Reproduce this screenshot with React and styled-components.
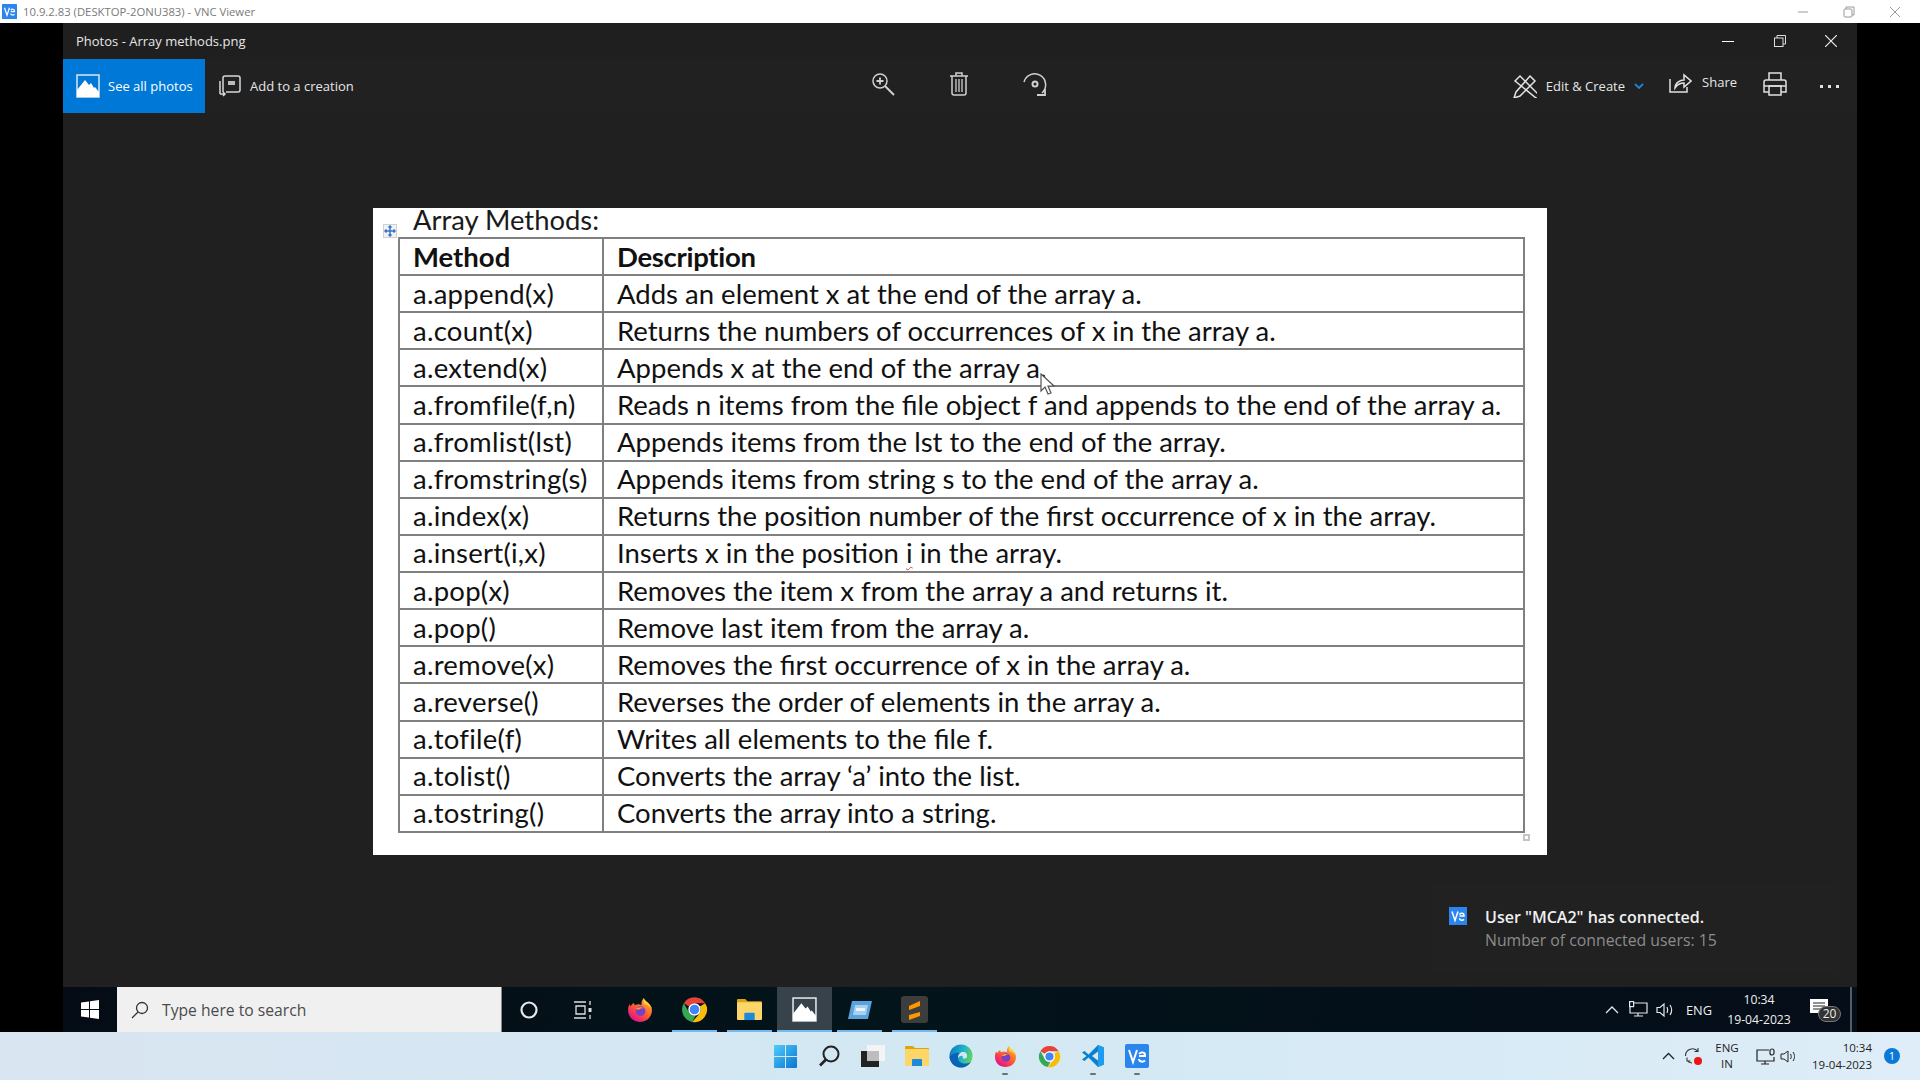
import React from 'react';
import styled, { createGlobalStyle } from 'styled-components';

const rows = [
  ['a.append(x)', 'Adds an element x at the end of the array a.'],
  ['a.count(x)', 'Returns the numbers of occurrences of x in the array a.'],
  ['a.extend(x)', 'Appends x at the end of the array a.'],
  ['a.fromfile(f,n)', 'Reads n items from the file object f and appends to the end of the array a.'],
  ['a.fromlist(lst)', 'Appends items from the lst to the end of the array.'],
  ['a.fromstring(s)', 'Appends items from string s to the end of the array a.'],
  ['a.index(x)', 'Returns the position number of the first occurrence of x in the array.'],
  ['a.insert(i,x)', <>Inserts x in the position <Squiggle>i</Squiggle> in the array.</>],
  ['a.pop(x)', 'Removes the item x from the array a and returns it.'],
  ['a.pop()', 'Remove last item from the array a.'],
  ['a.remove(x)', 'Removes the first occurrence of x in the array a.'],
  ['a.reverse()', 'Reverses the order of elements in the array a.'],
  ['a.tofile(f)', 'Writes all elements to the file f.'],
  ['a.tolist()', 'Converts the array ‘a’ into the list.'],
  ['a.tostring()', 'Converts the array into a string.'],
];

function Squiggle({ children }) {
  return <SquiggleText>{children}</SquiggleText>;
}

const VncLogo = ({ size = 16, radius = 2 }) => (
  <svg width={size} height={size} viewBox="0 0 24 24">
    <rect width="24" height="24" rx={radius} fill="#2a85ee" />
    <path d="M4 6l4 12 4-12" fill="none" stroke="#fff" strokeWidth="2" />
    <path d="M14 10c2-2.500 6-2 6 1v1h-6M20 16.500c-2 1.800-6 1.500-6-1.500" fill="none" stroke="#fff" strokeWidth="2" />
  </svg>
);

const PhotosIcon = ({ size = 24 }) => (
  <svg width={size} height={size} viewBox="0 0 24 24">
    <rect x="1" y="1" width="22" height="22" fill="none" stroke="#dfe6ea" strokeWidth="1.500" />
    <path d="M1 23V16L9 6l4 5 2-2 3 5 1-1 4 5v5Z" fill="#fff" />
  </svg>
);

const Firefox = ({ size = 26 }) => (
  <svg width={size} height={size} viewBox="0 0 48 48">
    <defs>
      <linearGradient id="ffx" x1="0.800" y1="0.100" x2="0.200" y2="0.900">
        <stop offset="0" stopColor="#ffb028" />
        <stop offset="0.500" stopColor="#ff5b2e" />
        <stop offset="1" stopColor="#e3128b" />
      </linearGradient>
    </defs>
    <path d="M31 2c1 5 6 7 9 10 4 4 6 8 6 13 0 12-10 21-22 21S2 37 2 25c0-5 1-9 3-12 0 2 1 3 2 4 1-3 3-5 6-6 0 2 1 3 2 4 3-2 9-2 12 0-1-5 1-10 4-13Z" fill="url(#ffx)" />
    <path d="M31 2c1 5 6 7 9 10 3 3 5 7 6 10-3-5-8-8-14-9-1-4-2-8-1-11Z" fill="#ffd23c" />
    <circle cx="25" cy="26" r="9" fill="#7b3ec8" />
    <path d="M16 22c3-3 10-5 16-1-4-1-8 0-9 2-2 0-5 0-7-1Z" fill="#ff9b35" />
  </svg>
);

const Chrome = ({ size = 27 }) => (
  <svg width={size} height={size} viewBox="0 0 48 48">
    <path d="M24 2a22 22 0 0 1 19 11H24a11 11 0 0 0-9.500 5.500L5 13A22 22 0 0 1 24 2Z" fill="#ea4335" />
    <path d="M5 13l9.500 16.500a11 11 0 0 0 11.500 5.400L20 46A22 22 0 0 1 5 13Z" fill="#34a853" />
    <path d="M43 13a22 22 0 0 1-23 33l10-11.500 3.500-5a11 11 0 0 0 0-11Z" fill="#fbbc05" />
    <circle cx="24" cy="24" r="11" fill="#fff" />
    <circle cx="24" cy="24" r="8.500" fill="#4285f4" />
  </svg>
);

const Explorer = ({ size = 24 }) => (
  <svg width={size} height={size} viewBox="0 0 24 24">
    <path d="M0 3a1 1 0 0 1 1-1h7l2 2h13a1 1 0 0 1 1 1v3H0Z" fill="#d9a514" />
    <rect y="5" width="24" height="17" rx="1" fill="#fcd669" />
    <path d="M7 22v-6a1 1 0 0 1 1-1h8a1 1 0 0 1 1 1v6Z" fill="#1b8adb" />
  </svg>
);

const Edge = ({ size = 24 }) => (
  <svg width={size} height={size} viewBox="0 0 48 48">
    <defs>
      <linearGradient id="edg" x1="0" y1="0.200" x2="1" y2="0.500">
        <stop offset="0" stopColor="#0c78c5" />
        <stop offset="0.550" stopColor="#1fb2c9" />
        <stop offset="1" stopColor="#62d65f" />
      </linearGradient>
    </defs>
    <circle cx="24" cy="24" r="23" fill="url(#edg)" />
    <path d="M1 26C2 36 10 47 24 47c8 0 15-4 20-11-4 2-8 3-13 3-8 0-13-5-13-11 0-4 2-7 5-9-4-2-8-2-12 0C6 21 2 23 1 26Z" fill="#0b62b4" />
    <path d="M18 28c0-7 4-12 10-12 6 0 9 4 8 10-1 3-4 4-7 3-2-1-1-3-2-5-2-1-6 0-9 4Z" fill="#d2e7f3" />
  </svg>
);

const VsCode = ({ size = 24 }) => (
  <svg width={size} height={size} viewBox="0 0 48 48">
    <path d="M34 2 15 21 7 14l-5 3 9 7-9 7 5 3 8-7 19 19 12-5V7Zm0 13v18L22 24Z" fill="#0f7fcb" fillRule="evenodd" />
    <path d="M34 2 46 7v34l-12 5v-13V15Z" fill="#1f9cf0" />
  </svg>
);

const Sublime = () => (
  <svg width="27" height="27" viewBox="0 0 27 27">
    <rect width="27" height="27" rx="3" fill="#3d3d3d" />
    <path d="M19 5v5L8 14v-4ZM8 12l11 4v4L8 24v-5l11-3" fill="#ff9800" />
  </svg>
);

const Win11Logo = () => (
  <svg width="23" height="23" viewBox="0 0 23 23">
    <defs>
      <linearGradient id="win11" x1="0" y1="0" x2="1" y2="1">
        <stop offset="0" stopColor="#4fcdf9" />
        <stop offset="1" stopColor="#0a74d4" />
      </linearGradient>
    </defs>
    <path d="M0 1a1 1 0 0 1 1-1h10v11H0ZM12 0h10a1 1 0 0 1 1 1v10H12ZM0 12h11v11H1a1 1 0 0 1-1-1ZM12 12h11v10a1 1 0 0 1-1 1H12Z" fill="url(#win11)" />
  </svg>
);

const Stroke = ({ w = 24, h = 24, color = '#dcdcdc', sw = 1.500, children }) => (
  <svg width={w} height={h} viewBox={`0 0 ${w} ${h}`} fill="none" stroke={color} strokeWidth={sw}>{children}</svg>
);

const App = () => (
  <>
    <GlobalStyle />
    <Page>
      <VncBar>
        <VncLogo size={15} radius={1} />
        <VncTitle>10.9.2.83 (DESKTOP-2ONU383) - VNC Viewer</VncTitle>
        <VncControls>
          <Stroke w={12} h={12} color="#9a9a9a" sw={1}><path d="M1 6h10" /></Stroke>
          <Stroke w={12} h={12} color="#9a9a9a" sw={1}><rect x="1" y="3" width="8" height="8" rx="1" /><path d="M3 3V1h8v8H9" /></Stroke>
          <Stroke w={12} h={12} color="#9a9a9a" sw={1}><path d="M1 1l10 10M11 1L1 11" /></Stroke>
        </VncControls>
      </VncBar>
      <VncTab />
      <Desktop>
        <AppWindow>
          <PhotosTitle>
            <span>Photos - Array methods.png</span>
            <WindowControls>
              <Stroke w={12} h={12} color="#fff" sw={1}><path d="M0 6.500h12" /></Stroke>
              <Stroke w={12} h={12} color="#ddd" sw={1}><rect x="0.500" y="3" width="8.500" height="8.500" /><path d="M3 3V0.500h8.500V9H9" /></Stroke>
              <Stroke w={12} h={12} color="#eee" sw={1.200}><path d="M0 0l12 12M12 0L0 12" /></Stroke>
            </WindowControls>
          </PhotosTitle>

          <Toolbar>
            <ToolGroup>
              <SeeAll>
                <PhotosIcon />
                See all photos
              </SeeAll>
              <AddCreation>
                <Stroke w={22} h={22} color="#d8d8d8">
                  <path d="M4 17V3a2 2 0 0 1 2-2h13a2 2 0 0 1 2 2v12a2 2 0 0 1-2 2H7" />
                  <rect x="9" y="6" width="7" height="4" fill="#bbb" stroke="none" />
                  <path d="M1 19h5m-2-2 2 2-2 2M1 6v13" />
                </Stroke>
                Add to a creation
              </AddCreation>
            </ToolGroup>

            <CenterTools>
              <ToolIcon>
                <Stroke color="#d0d0d0">
                  <circle cx="9" cy="9" r="7" />
                  <path d="M14 14l9 9" strokeWidth="2" />
                  <path d="M5.500 9h7M9 5.500v7" strokeWidth="1.800" />
                </Stroke>
              </ToolIcon>
              <ToolIcon>
                <Stroke color="#d0d0d0">
                  <path d="M3 4h18M5 4v17a2 2 0 0 0 2 2h10a2 2 0 0 0 2-2V4M9 4V1h6v3" />
                  <path d="M9 7v13M12 7v13M15 7v13" strokeWidth="1.300" />
                </Stroke>
              </ToolIcon>
              <ToolIcon>
                <Stroke color="#d0d0d0">
                  <path d="M1 10A11 11 0 1 1 19 21" />
                  <circle cx="12" cy="12" r="2.500" strokeWidth="2" />
                  <path d="M14 23h8v-6" strokeWidth="1.800" />
                </Stroke>
              </ToolIcon>
            </CenterTools>

            <RightTools>
              <EditCreate>
                <Stroke color="#e4e4e4">
                  <path d="M2 7l5-5 19 19v3h-3ZM17 2l5 5L7 22l-6 2 2-6Z" />
                </Stroke>
                <span>Edit &amp; Create</span>
                <Stroke w={10} h={6} color="#1a86d8" sw={1.800}><path d="M1 1l4 4 4-4" /></Stroke>
              </EditCreate>
              <ShareButton>
                <Stroke w={23} h={21} color="#e0e0e0">
                  <path d="M1 7v13h17v-5M6 16c0-5 5-8 9-8V3l7 6-7 6v-4c-4 0-7 2-9 5Z" />
                </Stroke>
                <span>Share</span>
              </ShareButton>
              <PrintButton>
                <Stroke color="#e0e0e0">
                  <path d="M6 8V1h12v7M6 20H1V10a2 2 0 0 1 2-2h18a2 2 0 0 1 2 2v10h-5" />
                  <rect x="6" y="14" width="12" height="9" />
                  <path d="M1 14h22" />
                </Stroke>
              </PrintButton>
              <MoreDots>
                <i /><i /><i />
              </MoreDots>
            </RightTools>
          </Toolbar>

          <Stage>
            <Sheet>
              <MoveHandle>
                <svg width="12" height="12" viewBox="0 0 12 12" fill="none" stroke="#3a72c8" strokeWidth="1.500">
                  <path d="M6 1v10M1 6h10M4.500 2.500 6 1l1.500 1.500M4.500 9.500 6 11l1.500-1.500M2.500 4.500 1 6l1.500 1.500M9.500 4.500 11 6 9.500 7.500" />
                </svg>
              </MoveHandle>
              <SheetTitle>Array Methods:</SheetTitle>
              <MethodsTable>
                <colgroup>
                  <MethodCol />
                  <col />
                </colgroup>
                <thead>
                  <Row>
                    <HeadCell>Method</HeadCell>
                    <HeadCell $tight>Description</HeadCell>
                  </Row>
                </thead>
                <tbody>
                  {rows.map(([method, desc]) => (
                    <Row key={method}>
                      <MethodCell>{method}</MethodCell>
                      <Cell>{desc}</Cell>
                    </Row>
                  ))}
                </tbody>
              </MethodsTable>
              <ResizeHandle />
              <Cursor viewBox="0 0 16 24" width="16" height="24">
                <path d="M1 1v17l4-4 3 7 3-1-3-7h6Z" fill="#fff" stroke="#555" strokeWidth="1.200" />
              </Cursor>
            </Sheet>
          </Stage>

          <Toast>
            <VncLogo size={18} radius={0} />
            <ToastText>
              <ToastTitle>User "MCA2" has connected.</ToastTitle>
              <ToastSub>Number of connected users: 15</ToastSub>
            </ToastText>
          </Toast>

          <InnerTaskbar>
            <StartSlot>
              <svg width="18" height="19" viewBox="0 0 18 19" fill="#fff">
                <path d="M0 2.600 8 1.400V9H0ZM9 1.200 18 0v9H9ZM0 10h8v7.600L0 16.400ZM9 10h9v9l-9-1.300Z" />
              </svg>
            </StartSlot>
            <SearchBox>
              <Stroke w={18} h={18} color="#333" sw={1.300}>
                <circle cx="11" cy="7" r="5.500" />
                <path d="M7 11l-6 6" />
              </Stroke>
              Type here to search
            </SearchBox>
            <TaskSlot>
              <Stroke w={20} h={20} color="#e8e8e8" sw={2.200}><circle cx="10" cy="10" r="7.500" /></Stroke>
            </TaskSlot>
            <TaskSlot>
              <Stroke w={20} h={20} color="#e0e0e0" sw={1.300}>
                <path d="M1 2h12M1 18h12M3 6h9v8H3ZM17 1v4M17 15v4" />
                <rect x="15.500" y="8" width="3" height="4" fill="#e0e0e0" stroke="none" />
              </Stroke>
            </TaskSlot>
            <TaskSlot $first><Firefox /></TaskSlot>
            <TaskSlot $open><Chrome /></TaskSlot>
            <TaskSlot $open><Explorer size={25} /></TaskSlot>
            <TaskSlot $open $active><PhotosIcon size={25} /></TaskSlot>
            <TaskSlot $open>
              <svg width="27" height="20" viewBox="0 0 27 20">
                <path d="M6 1h20l-4 18H2Z" fill="#5aa3dd" />
                <path d="M9 5h13l-2 10H7Z" fill="#a9d0ee" />
                <path d="M10 8h9v3h-9Z" fill="#eaf4fb" />
              </svg>
            </TaskSlot>
            <TaskSlot $open><Sublime /></TaskSlot>

            <InnerTray>
              <TrayIcon>
                <Stroke w={14} h={14} color="#e6e6e6" sw={1.300}><path d="M1 10l6-6 6 6" /></Stroke>
              </TrayIcon>
              <TrayIcon>
                <Stroke w={19} h={17} color="#e6e6e6" sw={1.200}>
                  <path d="M5 2h13v10H1V6M9 12v3M5 15h9" />
                  <rect x="0.600" y="0.600" width="4" height="5" />
                </Stroke>
              </TrayIcon>
              <TrayIcon>
                <Stroke w={19} h={16} color="#e6e6e6" sw={1.200}>
                  <path d="M1 5.500h3L8 2v12l-4-3.500H1ZM11 5c1 2 1 4 0 6M14 3c2 3 2 7 0 10" />
                </Stroke>
              </TrayIcon>
              <InnerLang>ENG</InnerLang>
              <InnerClock>
                <span>10:34</span>
                <span>19-04-2023</span>
              </InnerClock>
              <ActionCenter>
                <svg width="18" height="15" viewBox="0 0 18 15">
                  <path d="M0 0h18v14H0Z" fill="#fff" />
                  <path d="M3 4h12M3 7h12M3 10h12" stroke="#222" strokeWidth="1" />
                </svg>
                <ActionBadge>20</ActionBadge>
              </ActionCenter>
              <ShowDesktop />
            </InnerTray>
          </InnerTaskbar>
        </AppWindow>
      </Desktop>

      <HostTaskbar>
        <HostIcons>
          <HostSlot><Win11Logo /></HostSlot>
          <HostSlot>
            <Stroke w={22} h={22} color="#222" sw={2}>
              <circle cx="13" cy="9" r="7.500" />
              <path d="M8 14.500 2 20.500" strokeWidth="2.600" />
            </Stroke>
          </HostSlot>
          <HostSlot>
            <svg width="24" height="22" viewBox="0 0 24 22">
              <rect y="6" width="18" height="16" fill="#222" />
              <rect x="6" y="0" width="18" height="16" fill="#f4f4f4" />
              <rect x="6" y="6" width="12" height="10" fill="#bdbdbd" />
            </svg>
          </HostSlot>
          <HostSlot><Explorer /></HostSlot>
          <HostSlot><Edge /></HostSlot>
          <HostSlot $running><Firefox size={23} /></HostSlot>
          <HostSlot><Chrome size={23} /></HostSlot>
          <HostSlot $running><VsCode /></HostSlot>
          <HostSlot $running><VncLogo size={24} /></HostSlot>
        </HostIcons>
        <HostTray>
          <ChevronSlot>
            <Stroke w={13} h={13} color="#222" sw={1.300}><path d="M1 9l5.500-5.500L12 9" /></Stroke>
          </ChevronSlot>
          <SyncIcon>
            <Stroke w={18} h={18} color="#333" sw={1.100}>
              <path d="M1.500 9A7 7 0 0 1 14 4.500M14 1v3.500h-3.500M3 13.500A7 7 0 0 0 8 16M3 10.500v3.500h3.500" />
            </Stroke>
            <RedDot />
          </SyncIcon>
          <HostLang>
            <span>ENG</span>
            <span>IN</span>
          </HostLang>
          <Stroke w={20} h={17} color="#222" sw={1.200}>
            <path d="M13 2H1v11h17V9M9 13v3M5 16h8" />
            <rect x="14" y="1" width="4" height="6" rx="2" />
          </Stroke>
          <Stroke w={17} h={15} color="#222" sw={1}>
            <path d="M1 5h3l4-3v11l-4-3H1ZM10.500 5c1 1.500 1 3.500 0 5M13 3c2 3 2 6 0 9" />
          </Stroke>
          <HostClock>
            <span>10:34</span>
            <span>19-04-2023</span>
          </HostClock>
          <NotifyBadge>1</NotifyBadge>
        </HostTray>
      </HostTaskbar>
    </Page>
  </>
);

const GlobalStyle = createGlobalStyle`
  html, body {
    margin: 0;
    padding: 0;
    background: #000;
    font-family: "Open Sans", "Noto Sans", sans-serif;
  }
  * {
    box-sizing: border-box;
  }
`;

const Page = styled.div`
  position: relative;
  width: 1920px;
  height: 1080px;
  display: flex;
  flex-direction: column;
  overflow: hidden;
`;

const VncBar = styled.div`
  height: 23px;
  flex: none;
  display: flex;
  align-items: center;
  padding-left: 2px;
  background: #fff;
`;

const VncTitle = styled.span`
  margin-left: 6px;
  font-size: 11.300px;
  color: #7a7a7a;
`;

const VncControls = styled.div`
  margin-left: auto;
  width: 123px;
  padding-right: 19px;
  display: flex;
  justify-content: space-between;
`;

const VncTab = styled.div`
  position: absolute;
  left: 828px;
  top: 23px;
  width: 264px;
  height: 4px;
  background: #fff;
  border: 1px solid #000;
  border-top: none;
`;

const Desktop = styled.div`
  flex: 1;
  min-height: 0;
  display: flex;
  padding: 0 63px;
  background: #000;
`;

const AppWindow = styled.div`
  position: relative;
  flex: 1;
  display: flex;
  flex-direction: column;
  background: #202020;
`;

const PhotosTitle = styled.div`
  height: 36px;
  flex: none;
  display: flex;
  align-items: center;
  justify-content: space-between;
  padding-left: 13px;
  font-size: 13px;
  color: #e6e6e6;
  background: #1f1f1f;
`;

const WindowControls = styled.div`
  width: 115px;
  margin-right: 20px;
  display: flex;
  justify-content: space-between;
`;

const Toolbar = styled.div`
  height: 54px;
  flex: none;
  display: grid;
  grid-template-columns: 782px 229px 1fr;
  font-size: 13px;
  color: #e6e6e6;
  background: #212121;
`;

const ToolGroup = styled.div`
  display: flex;
  align-items: stretch;
`;

const SeeAll = styled.div`
  width: 142px;
  display: flex;
  align-items: center;
  gap: 8px;
  padding-left: 13px;
  color: #fff;
  background: #0078d7;
`;

const AddCreation = styled.div`
  display: flex;
  align-items: center;
  gap: 9px;
  padding-left: 14px;
`;

const CenterTools = styled.div`
  display: flex;
  align-items: center;
`;

const ToolIcon = styled.div`
  width: 76px;
  display: flex;
  justify-content: center;
  margin-top: -5px;
`;

const RightTools = styled.div`
  display: flex;
  align-items: center;
  justify-content: flex-end;
  padding-right: 18px;
`;

const EditCreate = styled.div`
  display: flex;
  align-items: center;
  gap: 9px;
  margin-right: 25px;
`;

const ShareButton = styled.div`
  display: flex;
  align-items: center;
  gap: 10px;
  margin-top: -8px;
  margin-right: 26px;
`;

const PrintButton = styled.div`
  display: flex;
  margin-top: -5px;
  margin-right: 33px;
`;

const MoreDots = styled.div`
  display: flex;
  gap: 5px;

  i {
    width: 3px;
    height: 3px;
    background: #e0e0e0;
  }
`;

const Stage = styled.div`
  flex: 1;
  min-height: 0;
  padding: 95px 0 0 310px;
`;

const Sheet = styled.div`
  position: relative;
  width: 1174px;
  height: 647px;
  padding: 0 22px 0 25px;
  background: #fff;
  font-family: Lato, "Open Sans", sans-serif;
  color: #111;
`;

const MoveHandle = styled.div`
  position: absolute;
  left: 10px;
  top: 16px;
  width: 14px;
  height: 14px;
  display: flex;
  align-items: center;
  justify-content: center;
  background: #eef1f6;
  border: 1px solid #d0d0d0;
`;

const SheetTitle = styled.div`
  height: 29px;
  padding-left: 15px;
  font-size: 27.400px;
  line-height: 24px;
  color: #1a1a1a;
`;

const MethodsTable = styled.table`
  width: 1127px;
  height: 596px;
  border-collapse: collapse;
  table-layout: fixed;
  font-size: 27.500px;
`;

const MethodCol = styled.col`
  width: 204px;
`;

const Row = styled.tr`
  height: 37px;
`;

const Cell = styled.td`
  padding: 0 0 0 13px;
  line-height: 30px;
  white-space: nowrap;
  border: 2px solid #808080;
`;

const MethodCell = styled(Cell)`
  letter-spacing: 0.25px;
`;

const HeadCell = styled.th`
  padding: 0 0 0 13px;
  line-height: 28px;
  font-weight: 700;
  text-align: left;
  letter-spacing: ${(p) => (p.$tight ? '-0.3px' : '0')};
  border: 2px solid #808080;
`;

const SquiggleText = styled.span`
  text-decoration: underline wavy #e53935 1px;
  text-underline-offset: 3px;
`;

const ResizeHandle = styled.div`
  position: absolute;
  left: 1150px;
  top: 626px;
  width: 7px;
  height: 7px;
  background: #fff;
  border: 2px solid #c4c4c4;
`;

const Cursor = styled.svg`
  position: absolute;
  left: 667px;
  top: 165px;
`;

const Toast = styled.div`
  position: absolute;
  right: 18px;
  top: 860px;
  width: 408px;
  height: 90px;
  display: flex;
  align-items: flex-start;
  gap: 18px;
  padding: 24px 0 0 18px;
  background: #212121;
`;

const ToastText = styled.div`
  display: flex;
  flex-direction: column;
  margin-top: -1px;
`;

const ToastTitle = styled.div`
  font-size: 16px;
  line-height: 23px;
  font-weight: 600;
  color: #f0f0f0;
`;

const ToastSub = styled.div`
  font-size: 15.800px;
  line-height: 22px;
  color: #8c8c8c;
`;

const InnerTaskbar = styled.div`
  height: 45px;
  flex: none;
  display: flex;
  align-items: stretch;
  background: linear-gradient(90deg, #050c15, #03141b 45%, #050d18);
`;

const StartSlot = styled.div`
  width: 54px;
  display: flex;
  align-items: center;
  justify-content: center;
`;

const SearchBox = styled.div`
  width: 385px;
  display: flex;
  align-items: center;
  gap: 13px;
  padding-left: 14px;
  font-size: 15.700px;
  color: #4b4b4b;
  background: #f0f0f0;
  border-right: 1px solid #888;
`;

const TaskSlot = styled.div`
  position: relative;
  width: ${(p) => (p.$open || p.$first ? 55 : 54)}px;
  margin-left: ${(p) => (p.$first ? 2 : 0)}px;
  display: flex;
  align-items: center;
  justify-content: center;
  background: ${(p) => (p.$active ? '#37424a' : 'transparent')};

  &::after {
    content: ${(p) => (p.$open ? "''" : 'none')};
    position: absolute;
    left: ${(p) => (p.$active ? 0 : 5)}px;
    right: ${(p) => (p.$active ? 0 : 5)}px;
    bottom: 0;
    height: 2px;
    background: #76b9ed;
  }
`;

const InnerTray = styled.div`
  margin-left: auto;
  display: flex;
  align-items: center;
  color: #eee;
`;

const TrayIcon = styled.div`
  width: 27px;
  display: flex;
  justify-content: center;
`;

const InnerLang = styled.div`
  width: 40px;
  text-align: center;
  font-size: 12.800px;
`;

const InnerClock = styled.div`
  width: 76px;
  margin-left: 2px;
  display: flex;
  flex-direction: column;
  align-items: center;
  gap: 3px;
  font-size: 12.200px;
  line-height: 17px;
`;

const ActionCenter = styled.div`
  position: relative;
  width: 40px;
  margin-left: 2px;
  display: flex;
  justify-content: center;
  margin-top: -6px;
`;

const ActionBadge = styled.span`
  position: absolute;
  left: 19px;
  top: 7px;
  width: 23px;
  height: 16px;
  border-radius: 8px;
  background: #333;
  border: 1px solid #777;
  font-size: 12px;
  line-height: 14px;
  text-align: center;
  color: #eee;
`;

const ShowDesktop = styled.div`
  width: 2px;
  height: 45px;
  margin: 0 5px 0 11px;
  background: #555c62;
`;

const HostTaskbar = styled.div`
  position: relative;
  height: 48px;
  flex: none;
  display: flex;
  align-items: center;
  justify-content: center;
  background: linear-gradient(90deg, #d9e5f1, #d2e8f3 50%, #deedf8);
`;

const HostIcons = styled.div`
  display: flex;
  margin-left: 2px;
`;

const HostSlot = styled.div`
  position: relative;
  width: 44px;
  height: 48px;
  display: flex;
  align-items: center;
  justify-content: center;

  &::after {
    content: ${(p) => (p.$running ? "''" : 'none')};
    position: absolute;
    left: 19px;
    bottom: 5px;
    width: 6px;
    height: 2px;
    border-radius: 1px;
    background: #6d7277;
  }
`;

const HostTray = styled.div`
  position: absolute;
  right: 20px;
  top: 0;
  height: 48px;
  display: flex;
  align-items: center;
  gap: 4px;
`;

const ChevronSlot = styled.div`
  display: flex;
  margin-right: 1px;
`;

const SyncIcon = styled.div`
  position: relative;
  display: flex;
  margin-left: 4px;
`;

const RedDot = styled.span`
  position: absolute;
  right: 0;
  bottom: 0;
  width: 8px;
  height: 8px;
  border-radius: 50%;
  background: #f01414;
`;

const HostLang = styled.div`
  width: 30px;
  margin: 0 10px 0 6px;
  display: flex;
  flex-direction: column;
  align-items: center;
  font-size: 11.500px;
  line-height: 16px;
  color: #222;
`;

const HostClock = styled.div`
  width: 68px;
  margin: 0 0 0 3px;
  display: flex;
  flex-direction: column;
  align-items: flex-end;
  gap: 2px;
  font-size: 11.500px;
  line-height: 15px;
  color: #222;
`;

const NotifyBadge = styled.div`
  width: 16px;
  height: 16px;
  margin-left: 8px;
  border-radius: 50%;
  background: #0a78d7;
  color: #fff;
  font-size: 11px;
  line-height: 16px;
  text-align: center;
`;

export default App;
